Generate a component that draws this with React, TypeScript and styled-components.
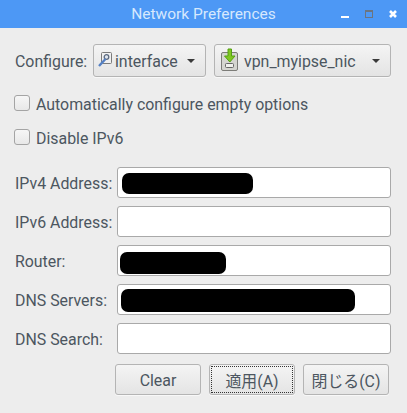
import React from "react";
import styled, { createGlobalStyle, css } from "styled-components";

const Global = createGlobalStyle`
  html, body { margin: 0; padding: 0; background: #ededed; }
  body { font-family: Roboto, "Noto Sans CJK JP", sans-serif; font-size: 15.9px; color: #4c5660; }
`;

const Window = styled.div`
  width: 407px;
  height: 413px;
  background: #ededed;
  display: flex;
  flex-direction: column;
  overflow: hidden;
`;

const TitleBar = styled.div`
  height: 28px;
  background: #4d98f5;
  position: relative;
  display: flex;
  align-items: center;
  justify-content: center;
  color: #d6e8fd;
  font-size: 15.5px;
`;

const TitleControls = styled.div`
  position: absolute;
  right: 0;
  top: 0;
  height: 28px;
`;

const Content = styled.div`
  display: flex;
  flex-direction: column;
  padding: 16px 16px 0 15px;
`;

const TopRow = styled.div`
  display: flex;
  align-items: center;
  gap: 8px;
  height: 33px;
`;

const ConfigureLabel = styled.span`
  width: 70px;
  padding-top: 2px;
`;

const raised = css`
  box-sizing: border-box;
  border: 1px solid #b4b4b4;
  border-radius: 3px;
  background: linear-gradient(#f4f4f4, #e4e4e4);
  box-shadow: 0 1px 0 #f8f8f8;
`;

const Combo = styled.div<{ $w: number }>`
  ${raised}
  width: ${(p) => p.$w}px;
  height: 33px;
  display: flex;
  align-items: center;
  padding: 0 10px 0 4px;
  gap: 2px;
`;

const ComboText = styled.span`
  flex: 1;
  padding-top: 2px;
`;

const Arrow = styled.span`
  width: 0;
  height: 0;
  border-left: 4.5px solid transparent;
  border-right: 4.5px solid transparent;
  border-top: 4.5px solid #3a3a3a;
`;

const CheckRow = styled.div<{ $top: number }>`
  display: flex;
  align-items: center;
  gap: 6px;
  margin-top: ${(p) => p.$top}px;
  height: 20px;
`;

const CheckBox = styled.span`
  box-sizing: border-box;
  width: 16px;
  height: 16px;
  margin-left: -1px;
  border: 1px solid #a4a4a4;
  border-radius: 3px;
  background: linear-gradient(#f6f6f6, #e8e8e8);
`;

const CheckText = styled.span`
  padding-top: 2px;
`;

const Fields = styled.div`
  display: grid;
  grid-template-columns: 102px 1fr;
  row-gap: 8px;
  margin-top: 20px;
  align-items: center;
`;

const FieldLabel = styled.label`
  padding-top: 2px;
`;

const Input = styled.div`
  position: relative;
  box-sizing: border-box;
  height: 31px;
  background: #fff;
  border: 1px solid #a9a9a9;
  border-radius: 3px;
`;

const Redaction = styled.div<{ $x: number; $y: number; $w: number; $h: number }>`
  position: absolute;
  left: ${(p) => p.$x}px;
  top: ${(p) => p.$y}px;
  width: ${(p) => p.$w}px;
  height: ${(p) => p.$h}px;
  background: #000;
  border-radius: 7px;
`;

const Actions = styled.div`
  display: flex;
  margin-top: 10px;
  padding-left: 100px;
  gap: 8px;
`;

const ActionButton = styled.div<{ $focus?: boolean }>`
  ${raised}
  position: relative;
  width: 86px;
  height: 31px;
  padding-top: 2px;
  display: flex;
  align-items: center;
  justify-content: center;
  ${(p) =>
    p.$focus &&
    css`
      &::after {
        content: "";
        position: absolute;
        inset: 1px;
        border: 1px dotted #333;
      }
    `}
`;

type Box = { x: number; y: number; w: number; h: number };

const rows: [string, Box | null][] = [
  ["IPv4 Address:", { x: 4, y: 5, w: 131, h: 21 }],
  ["IPv6 Address:", null],
  ["Router:", { x: 2, y: 6, w: 106, h: 22 }],
  ["DNS Servers:", { x: 3, y: 4, w: 234, h: 23 }],
  ["DNS Search:", null],
];

const KeyIcon = () => (
  <svg width="15" height="17" viewBox="0 0 15 17">
    <rect x="3.5" y="0.5" width="10" height="11" rx="1" fill="#f0f0f0" stroke="#7b7b7b" />
    <circle cx="8.5" cy="5" r="2.3" fill="#dfe5ee" stroke="#5d6b80" strokeWidth="1.3" />
    <path d="M7.5 7 1 14" stroke="#5580c4" strokeWidth="2.4" />
  </svg>
);

const NicIcon = () => (
  <svg width="23" height="25" viewBox="0 0 23 25">
    <rect x="2.5" y="4.5" width="16" height="18" rx="1.5" fill="#d5d5d0" stroke="#7c7c78" />
    <rect x="6.5" y="15.5" width="8" height="4" rx="1" fill="#f0f0ec" stroke="#666" />
    <path d="M9 1h3.5v7h3.5l-5.2 6-5.3-6H9z" fill="#7fc721" stroke="#55a012" />
  </svg>
);

const WindowIcons = () => (
  <svg width="67" height="28" viewBox="0 0 67 28">
    <rect x="1" y="16" width="8" height="2" fill="#fff" />
    <rect x="25.5" y="10.5" width="7" height="7" fill="none" stroke="#6b7480" />
    <rect x="25" y="10" width="8" height="2" fill="#6b7480" />
    <path d="M50 11l6 6M56 11l-6 6" stroke="#fff" strokeWidth="2.6" />
  </svg>
);

export default function App() {
  return (
    <Window>
      <Global />
      <TitleBar>
        Network Preferences
        <TitleControls>
          <WindowIcons />
        </TitleControls>
      </TitleBar>
      <Content>
        <TopRow>
          <ConfigureLabel>Configure:</ConfigureLabel>
          <Combo $w={113}>
            <KeyIcon />
            <ComboText>interface</ComboText>
            <Arrow />
          </Combo>
          <Combo $w={177}>
            <NicIcon />
            <ComboText>vpn_myipse_nic</ComboText>
            <Arrow />
          </Combo>
        </TopRow>
        <CheckRow $top={16}>
          <CheckBox />
          <CheckText>Automatically configure empty options</CheckText>
        </CheckRow>
        <CheckRow $top={14}>
          <CheckBox />
          <CheckText>Disable IPv6</CheckText>
        </CheckRow>
        <Fields>
          {rows.map(([label, box]) => (
            <React.Fragment key={label}>
              <FieldLabel>{label}</FieldLabel>
              <Input>{box && <Redaction $x={box.x} $y={box.y} $w={box.w} $h={box.h} />}</Input>
            </React.Fragment>
          ))}
        </Fields>
        <Actions>
          <ActionButton>Clear</ActionButton>
          <ActionButton $focus>適用(A)</ActionButton>
          <ActionButton>閉じる(C)</ActionButton>
        </Actions>
      </Content>
    </Window>
  );
}
